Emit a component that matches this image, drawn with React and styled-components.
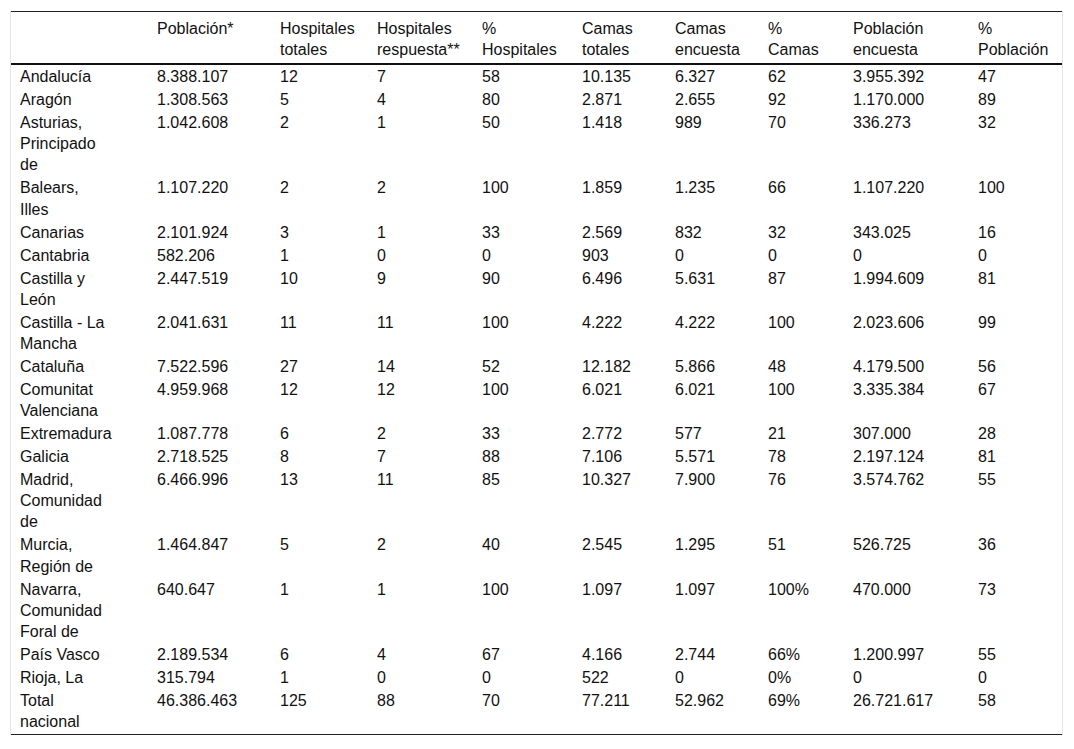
import styled, { createGlobalStyle } from "styled-components";

const GlobalStyle = createGlobalStyle`
  html, body {
    margin: 0;
    padding: 0;
    background: #fff;
  }
  body {
    font-family: "Liberation Sans", Arial, sans-serif;
    color: #111;
  }
`;

const widths = [137, 123, 97, 105, 100, 93, 93, 85, 125, 93];

const headers = [
  [""],
  ["Población*"],
  ["Hospitales", "totales"],
  ["Hospitales", "respuesta**"],
  ["%", "Hospitales"],
  ["Camas", "totales"],
  ["Camas", "encuesta"],
  ["%", "Camas"],
  ["Población", "encuesta"],
  ["%", "Población"],
];

const rows = [
  [["Andalucía"], "8.388.107", "12", "7", "58", "10.135", "6.327", "62", "3.955.392", "47"],
  [["Aragón"], "1.308.563", "5", "4", "80", "2.871", "2.655", "92", "1.170.000", "89"],
  [["Asturias,", "Principado", "de"], "1.042.608", "2", "1", "50", "1.418", "989", "70", "336.273", "32"],
  [["Balears,", "Illes"], "1.107.220", "2", "2", "100", "1.859", "1.235", "66", "1.107.220", "100"],
  [["Canarias"], "2.101.924", "3", "1", "33", "2.569", "832", "32", "343.025", "16"],
  [["Cantabria"], "582.206", "1", "0", "0", "903", "0", "0", "0", "0"],
  [["Castilla y", "León"], "2.447.519", "10", "9", "90", "6.496", "5.631", "87", "1.994.609", "81"],
  [["Castilla - La", "Mancha"], "2.041.631", "11", "11", "100", "4.222", "4.222", "100", "2.023.606", "99"],
  [["Cataluña"], "7.522.596", "27", "14", "52", "12.182", "5.866", "48", "4.179.500", "56"],
  [["Comunitat", "Valenciana"], "4.959.968", "12", "12", "100", "6.021", "6.021", "100", "3.335.384", "67"],
  [["Extremadura"], "1.087.778", "6", "2", "33", "2.772", "577", "21", "307.000", "28"],
  [["Galicia"], "2.718.525", "8", "7", "88", "7.106", "5.571", "78", "2.197.124", "81"],
  [["Madrid,", "Comunidad", "de"], "6.466.996", "13", "11", "85", "10.327", "7.900", "76", "3.574.762", "55"],
  [["Murcia,", "Región de"], "1.464.847", "5", "2", "40", "2.545", "1.295", "51", "526.725", "36"],
  [["Navarra,", "Comunidad", "Foral de"], "640.647", "1", "1", "100", "1.097", "1.097", "100%", "470.000", "73"],
  [["País Vasco"], "2.189.534", "6", "4", "67", "4.166", "2.744", "66%", "1.200.997", "55"],
  [["Rioja, La"], "315.794", "1", "0", "0", "522", "0", "0%", "0", "0"],
  [["Total", "nacional"], "46.386.463", "125", "88", "70", "77.211", "52.962", "69%", "26.721.617", "58"],
];

const Wrapper = styled.div`
  margin: 11px 0 0 10px;
  width: 1051px;
  border-left: 1px solid #e4e4e4;
  border-right: 1px solid #e4e4e4;
`;

const Table = styled.table`
  width: 1051px;
  table-layout: fixed;
  border-collapse: collapse;
  font-size: 16px;
  line-height: 21.06px;
  border-top: 1px solid #222;
  border-bottom: 1px solid #222;
`;

const HeadRow = styled.tr`
  border-bottom: 2px solid #111;
`;

const HeadCell = styled.th`
  text-align: left;
  font-weight: normal;
  vertical-align: top;
  padding: 6px 9px 3px;
  white-space: nowrap;
`;

const Row = styled.tr`
  &:last-child td {
    padding-bottom: 2px;
  }
`;

const Cell = styled.td`
  vertical-align: top;
  padding: 1px 9px;
  white-space: nowrap;
`;

const Lines = ({ lines }) =>
  lines.map((line, i) => (
    <span key={i}>
      {i > 0 && <br />}
      {line}
    </span>
  ));

export default function App() {
  return (
    <>
      <GlobalStyle />
      <Wrapper>
        <Table>
          <colgroup>
            {widths.map((w, i) => (
              <col key={i} style={{ width: w }} />
            ))}
          </colgroup>
          <thead>
            <HeadRow>
              {headers.map((h, i) => (
                <HeadCell key={i}>
                  <Lines lines={h} />
                </HeadCell>
              ))}
            </HeadRow>
          </thead>
          <tbody>
            {rows.map((r, i) => (
              <Row key={i}>
                <Cell>
                  <Lines lines={r[0]} />
                </Cell>
                {r.slice(1).map((v, j) => (
                  <Cell key={j}>{v}</Cell>
                ))}
              </Row>
            ))}
          </tbody>
        </Table>
      </Wrapper>
    </>
  );
}
